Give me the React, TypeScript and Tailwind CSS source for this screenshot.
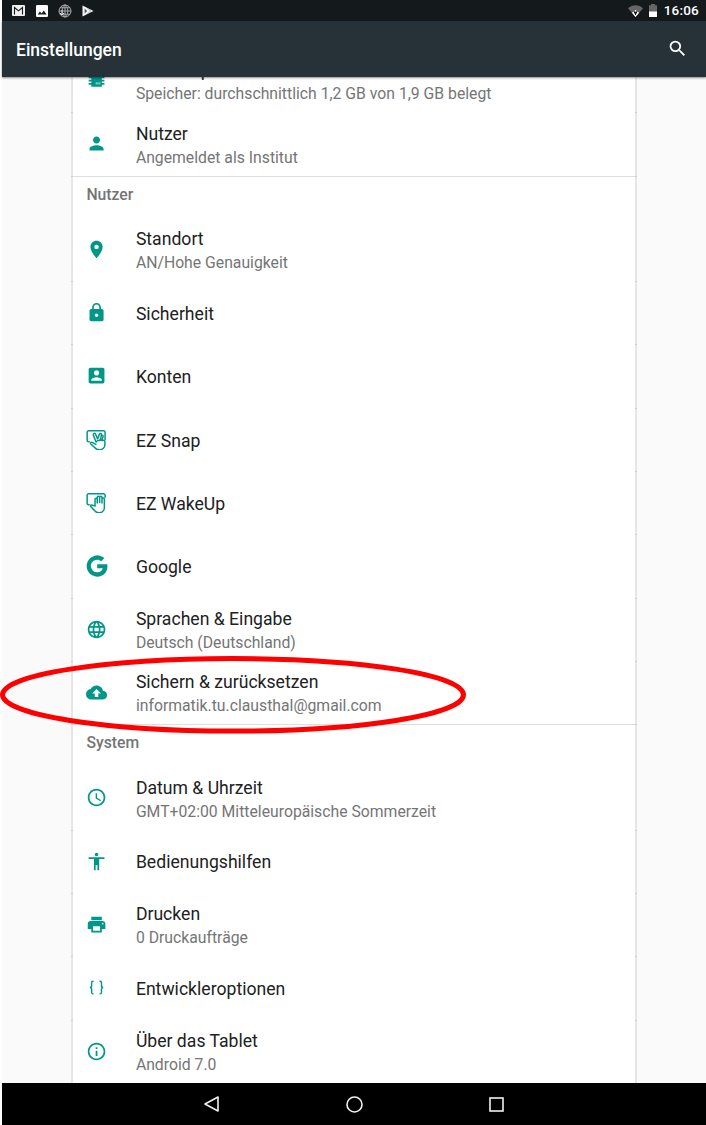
import type { ReactNode } from 'react';

const Glyph = ({ children, className = 'size-[21.1px]' }: { children: ReactNode; className?: string }) => (
  <svg viewBox="0 0 24 24" fill="currentColor" className={`block shrink-0 ${className}`}>
    {children}
  </svg>
);

const icons = {
  memory: (
    <Glyph>
      <path d="M6 4.500h12v3h3v1.800h-3v1.900h3V13h-3v1.900h3v1.800h-3V19H6v-2.300H3v-1.800h3V13H3v-1.800h3V9.300H3V7.500h3z" />
      <path d="M11 14h2.400v2.400H11zM14 14h2.400v2.400H14z" fill="#7fcac2" />
    </Glyph>
  ),
  person: (
    <Glyph>
      <path d="M12 12c2.21 0 4-1.79 4-4s-1.79-4-4-4-4 1.79-4 4 1.79 4 4 4zm0 2c-2.67 0-8 1.34-8 4v2h16v-2c0-2.66-5.33-4-8-4z" />
    </Glyph>
  ),
  place: (
    <Glyph>
      <path d="M12 2C8.13 2 5 5.13 5 9c0 5.25 7 13 7 13s7-7.75 7-13c0-3.87-3.13-7-7-7zm0 9.5a2.5 2.5 0 0 1 0-5 2.5 2.5 0 0 1 0 5z" />
    </Glyph>
  ),
  lock: (
    <Glyph>
      <path d="M18 8h-1V6c0-2.76-2.24-5-5-5S7 3.24 7 6v2H6c-1.1 0-2 .9-2 2v10c0 1.1.9 2 2 2h12c1.1 0 2-.9 2-2V10c0-1.1-.9-2-2-2zm-6 9c-1.1 0-2-.9-2-2s.9-2 2-2 2 .9 2 2-.9 2-2 2zm3.1-9H8.9V6c0-1.71 1.39-3.1 3.1-3.1s3.1 1.39 3.1 3.1v2z" />
    </Glyph>
  ),
  account: (
    <Glyph>
      <path d="M3 5v14c0 1.1.89 2 2 2h14c1.1 0 2-.9 2-2V5c0-1.1-.9-2-2-2H5c-1.11 0-2 .9-2 2zm12 4c0 1.66-1.34 3-3 3s-3-1.34-3-3 1.34-3 3-3 3 1.34 3 3zm-9 8c0-2 4-3.1 6-3.1s6 1.1 6 3.1v1H6v-1z" />
    </Glyph>
  ),
  snap: (
    <Glyph>
      <g fill="none" stroke="currentColor" strokeWidth="1.7" strokeLinecap="round" strokeLinejoin="round">
        <path d="M3.600 14.500H3a1.700 1.700 0 0 1-1.700-1.700V3.700A1.700 1.700 0 0 1 3 2h17a1.700 1.700 0 0 1 1.700 1.700V12" />
        <path d="m11.300 14.500-3-7.700c-.5-1.900 1.700-2.600 2.500-.9l2.400 5.400 2-5.200c.6-1.600 2.700-1 2.400.6l-1.300 5.600M17.300 8c.700-1.600 2.400-.8 2.100.6l-1.200 4" />
        <path d="M11.300 17.500 7 15.200c-1.200-.6-2.500.7-1.500 1.900l4.300 4c1.500 1.700 3.100 2.500 5.400 2.500 3.700 0 6.300-2.500 6.300-5.900v-3.400c0-1.500-2-1.900-3.200-1.200-1-1-2.500-.8-3.200.2-1.300-.7-2.800 0-3.200 1.200" />
      </g>
    </Glyph>
  ),
  wake: (
    <Glyph>
      <g fill="none" stroke="currentColor" strokeWidth="1.7" strokeLinecap="round" strokeLinejoin="round">
        <path d="M3.600 14.500H3a1.700 1.700 0 0 1-1.700-1.700V3.700A1.700 1.700 0 0 1 3 2h17a1.700 1.700 0 0 1 1.700 1.700V6" />
        <path d="M10.300 16V8.300c0-1.600 2.500-1.600 2.500 0v4.200V6c0-1.600 2.700-1.600 2.700 0v6V6c0-1.600 2.700-1.600 2.700 0v6.500V8c0-1.600 2.700-1.600 2.700 0v9.600c0 3.500-2.600 6-6.100 6-2.200 0-3.700-.8-5-2.400l-4.300-4.600c-1-1.300.6-2.400 1.700-1.500z" />
      </g>
    </Glyph>
  ),
  google: (
    <Glyph className="size-[22px]">
      <path d="M12.200 10v4.400h6.100c-.6 2.500-2.700 4.500-6.100 4.500a6.900 6.900 0 1 1 0-13.800c1.800 0 3.300.6 4.500 1.700l3.400-3.400A11.600 11.600 0 1 0 12.200 23.600c6.700 0 11.200-4.700 11.200-11.300 0-.8-.1-1.600-.2-2.300z" />
    </Glyph>
  ),
  language: (
    <Glyph>
      <path d="M11.990 2C6.470 2 2 6.480 2 12s4.470 10 9.990 10C17.520 22 22 17.520 22 12S17.520 2 11.990 2zm6.930 6h-2.950c-.320-1.250-.780-2.450-1.380-3.560 1.840.630 3.370 1.910 4.330 3.560zM12 4.040c.830 1.200 1.480 2.530 1.910 3.960h-3.820c.430-1.430 1.080-2.760 1.910-3.960zM4.260 14C4.100 13.360 4 12.690 4 12s.1-1.360.260-2h3.380c-.080.660-.140 1.320-.140 2s.060 1.340.140 2H4.260zm.820 2h2.950c.320 1.250.780 2.450 1.380 3.560-1.840-.630-3.370-1.900-4.330-3.560zm2.950-8H5.080c.960-1.660 2.490-2.930 4.330-3.560C8.810 5.550 8.350 6.750 8.030 8zM12 19.960c-.830-1.200-1.480-2.530-1.910-3.960h3.820c-.430 1.430-1.080 2.760-1.910 3.960zM14.340 14H9.660c-.090-.660-.160-1.320-.160-2s.070-1.350.160-2h4.680c.090.650.160 1.320.160 2s-.070 1.340-.160 2zm.250 5.560c.6-1.110 1.060-2.310 1.380-3.560h2.950c-.960 1.650-2.490 2.930-4.330 3.560zM16.360 14c.080-.660.140-1.320.140-2s-.060-1.340-.140-2h3.380c.160.640.260 1.310.260 2s-.1 1.360-.260 2h-3.380z" />
    </Glyph>
  ),
  backup: (
    <Glyph>
      <path d="M19.350 10.040C18.670 6.590 15.640 4 12 4 9.110 4 6.600 5.640 5.350 8.040 2.340 8.360 0 10.910 0 14c0 3.310 2.690 6 6 6h13c2.760 0 5-2.240 5-5 0-2.640-2.050-4.780-4.650-4.960zM14 13v4h-4v-4H7l5-5 5 5h-3z" />
    </Glyph>
  ),
  clock: (
    <Glyph>
      <path d="M11.990 2C6.470 2 2 6.480 2 12s4.470 10 9.990 10C17.520 22 22 17.520 22 12S17.520 2 11.990 2zM12 20c-4.420 0-8-3.580-8-8s3.580-8 8-8 8 3.580 8 8-3.580 8-8 8zm.5-13H11v6l5.250 3.150.750-1.230-4.500-2.670z" />
    </Glyph>
  ),
  accessibility: (
    <Glyph>
      <path d="M12 2c1.100 0 2 .9 2 2s-.9 2-2 2-2-.9-2-2 .9-2 2-2zm9 7h-6v13h-2v-6h-2v6H9V9H3V7h18v2z" />
    </Glyph>
  ),
  print: (
    <Glyph>
      <path d="M19 8H5c-1.660 0-3 1.340-3 3v6h4v4h12v-4h4v-6c0-1.660-1.340-3-3-3zm-3 11H8v-5h8v5zm3-7c-.550 0-1-.450-1-1s.450-1 1-1 1 .450 1 1-.450 1-1 1zm-1-9H6v4h12V3z" />
    </Glyph>
  ),
  braces: (
    <Glyph>
      <g fill="none" stroke="currentColor" strokeWidth="1.600">
        <path d="M8.600 4.800H8c-1 0-1.600.6-1.600 1.600v3.400c0 1.300-.6 2.200-2 2.200 1.400 0 2 .9 2 2.200v3.400c0 1 .6 1.600 1.600 1.600h.6" />
        <path d="M15.400 4.800h.6c1 0 1.600.6 1.600 1.600v3.400c0 1.300.6 2.200 2 2.200-1.400 0-2 .9-2 2.200v3.400c0 1-.6 1.600-1.600 1.600h-.6" />
      </g>
    </Glyph>
  ),
  info: (
    <Glyph>
      <path d="M11 17h2v-6h-2v6zm1-15C6.480 2 2 6.480 2 12s4.480 10 10 10 10-4.480 10-10S17.520 2 12 2zm0 18c-4.410 0-8-3.590-8-8s3.590-8 8-8 8 3.590 8 8-3.590 8-8 8zM11 9h2V7h-2v2z" />
    </Glyph>
  ),
};

type Entry = { icon: keyof typeof icons; title: string; detail?: string };

const deviceRows: Entry[] = [
  { icon: 'memory', title: 'Arbeitsspeicher', detail: 'Speicher: durchschnittlich 1,2 GB von 1,9 GB belegt' },
  { icon: 'person', title: 'Nutzer', detail: 'Angemeldet als Institut' },
];

const userRows: Entry[] = [
  { icon: 'place', title: 'Standort', detail: 'AN/Hohe Genauigkeit' },
  { icon: 'lock', title: 'Sicherheit' },
  { icon: 'account', title: 'Konten' },
  { icon: 'snap', title: 'EZ Snap' },
  { icon: 'wake', title: 'EZ WakeUp' },
  { icon: 'google', title: 'Google' },
  { icon: 'language', title: 'Sprachen & Eingabe', detail: 'Deutsch (Deutschland)' },
  { icon: 'backup', title: 'Sichern & zurücksetzen', detail: 'informatik.tu.clausthal@gmail.com' },
];

const systemRows: Entry[] = [
  { icon: 'clock', title: 'Datum & Uhrzeit', detail: 'GMT+02:00 Mitteleuropäische Sommerzeit' },
  { icon: 'accessibility', title: 'Bedienungshilfen' },
  { icon: 'print', title: 'Drucken', detail: '0 Druckaufträge' },
  { icon: 'braces', title: 'Entwickleroptionen' },
  { icon: 'info', title: 'Über das Tablet', detail: 'Android 7.0' },
];

function Row({ icon, title, detail }: Entry) {
  return (
    <div className="relative flex h-[63.3px] items-center pl-[13px] before:absolute before:bottom-0 before:-left-[2px] before:h-px before:w-[2px] before:bg-[#cfcfcf] after:absolute after:-right-[2px] after:bottom-0 after:h-px after:w-[2px] after:bg-[#cfcfcf]">
      <div className="flex w-[49.9px] shrink-0 pb-[2px] text-[#009688]">
        <span className="flex w-[22px] justify-center">{icons[icon]}</span>
      </div>
      <div className="pt-[0.4px] whitespace-nowrap">
        <div className="text-[17.62px] leading-6 text-[#212121]">{title}</div>
        {detail && <div className="text-[15.75px] leading-[23px] text-[#757575]">{detail}</div>}
      </div>
    </div>
  );
}

function Section({ heading, rows }: { heading?: string; rows: Entry[] }) {
  return (
    <section>
      {heading && (
        <h2 className="-mt-px flex h-[43.2px] items-start border-t border-[#dedede] pt-[7px] pl-[13.4px] text-[15.75px] leading-[22px] font-medium text-[#757575]">
          {heading}
        </h2>
      )}
      {rows.map((row) => (
        <Row key={row.title} {...row} />
      ))}
    </section>
  );
}

function StatusBar() {
  return (
    <div className="flex h-[21px] shrink-0 items-center justify-between bg-[#14191c] pr-[7px] pl-[10px] text-white">
      <div className="flex items-center">
        <svg viewBox="0 0 13 11" className="h-[11px] w-[13px]">
          <rect width="13" height="11" rx="1" fill="#f0f0f0" />
          <path d="M2.500 9.500V2.500l4 3.300 4-3.300v7" fill="none" stroke="#14191c" strokeWidth="1.100" />
        </svg>
        <svg viewBox="0 0 12 12" className="ml-[10.5px] size-3">
          <rect width="12" height="12" rx="1.200" fill="#fff" />
          <path d="m1.700 9.500 2.300-3 1.600 1.900 2.200-2.900 2.700 4z" fill="#14191c" />
        </svg>
        <svg viewBox="0 0 14 14" className="ml-[10px] size-[14px]" fill="none" stroke="#aaa">
          <circle cx="7" cy="7" r="6" />
          <ellipse cx="7" cy="7" rx="2.800" ry="6" />
          <path d="M1 7h12M2 3.800h10M2 10.200h10M7 1v12" />
          <path d="M4 6v5M2 9l2 2 2-2" stroke="#ddd" />
        </svg>
        <svg viewBox="0 0 12 12" className="ml-[10px] size-3">
          <path d="M.500.500 11.500 6 .5 11.500z" fill="#f5f5f5" />
          <path d="M2.600 3.500 5.200 6 2.600 8.500z" fill="#555" />
          <path d="m5.500 3 3 3-3 3" fill="none" stroke="#888" strokeWidth=".7" />
        </svg>
      </div>
      <div className="flex items-center">
        <svg viewBox="0 0 15 12" className="h-3 w-[15px]">
          <path d="M0 3.300C4-.700 11-.700 15 3.300L7.500 12z" fill="#666" />
          <path d="M3.900 7.700c2-1.600 5.200-1.600 7.200 0L7.500 12z" fill="#fff" />
          <path d="M6 6.500h3v2H8v1.600H7V8.500H6z" fill="#14191c" />
          <circle cx="7.500" cy="5.800" r=".8" fill="#fff" />
        </svg>
        <svg viewBox="0 0 8 13" className="mb-px ml-[6px] h-[13px] w-2">
          <path d="M2 0h4v1.200h2V8H0V1.200h2z" fill="#666" />
          <path d="M0 7.500h8V13H0z" fill="#fff" />
        </svg>
        <span className="ml-[7px] text-[13.5px] leading-none font-medium tracking-[0.2px]">16:06</span>
      </div>
    </div>
  );
}

export default function App() {
  return (
    <div className="relative h-[1125px] w-[706px] overflow-hidden bg-white pl-[2px] font-['Roboto','Noto_Sans',sans-serif]">
      <div className="flex h-full flex-col">
        <StatusBar />
        <header className="z-10 flex h-[56px] shrink-0 items-center justify-between bg-[#263238] pr-[17.5px] pl-[14px] text-white shadow-[0_1px_2px_rgba(0,0,0,0.45)]">
          <h1 className="pt-[2px] text-[17.5px] leading-6 font-medium">Einstellungen</h1>
          <Glyph>
            <path d="M15.500 14h-.790l-.280-.270A6.471 6.471 0 0 0 16 9.500 6.500 6.500 0 1 0 9.500 16c1.610 0 3.090-.590 4.230-1.570l.270.280v.790l5 4.990L20.490 19l-4.990-5zm-6 0C7.010 14 5 11.990 5 9.500S7.010 5 9.500 5 14 7.010 14 9.500 11.990 14 9.500 14z" />
          </Glyph>
        </header>
        <main className="min-h-0 flex-1 overflow-hidden bg-[#fafafa] pr-[69px] pl-[69px]">
          <div className="-mt-[27px] border-x-2 border-[#e6e6e6] bg-white">
            <Section rows={deviceRows} />
            <Section heading="Nutzer" rows={userRows} />
            <Section heading="System" rows={systemRows} />
          </div>
        </main>
        <nav className="flex h-[42px] shrink-0 items-center justify-center gap-[125.5px] bg-black">
          <svg viewBox="0 0 17 18" className="h-[18px] w-[17px]" fill="none" stroke="#f2f2f2" strokeWidth="1.600">
            <path d="M15 2v14L2 9z" strokeLinejoin="round" />
          </svg>
          <svg viewBox="0 0 17 17" className="size-[17px]" fill="none" stroke="#f2f2f2" strokeWidth="1.600">
            <circle cx="8.500" cy="8.500" r="7.500" />
          </svg>
          <svg viewBox="0 0 17 17" className="size-[17px]" fill="none" stroke="#f2f2f2" strokeWidth="1.600">
            <rect x="2" y="2" width="13" height="13" />
          </svg>
        </nav>
      </div>
      <svg viewBox="0 0 468 80" className="pointer-events-none absolute top-[655px] left-0 z-20 h-20 w-[468px]">
        <ellipse cx="233" cy="39.800" rx="230.500" ry="36.300" fill="none" stroke="#f00" strokeWidth="5" />
      </svg>
    </div>
  );
}
